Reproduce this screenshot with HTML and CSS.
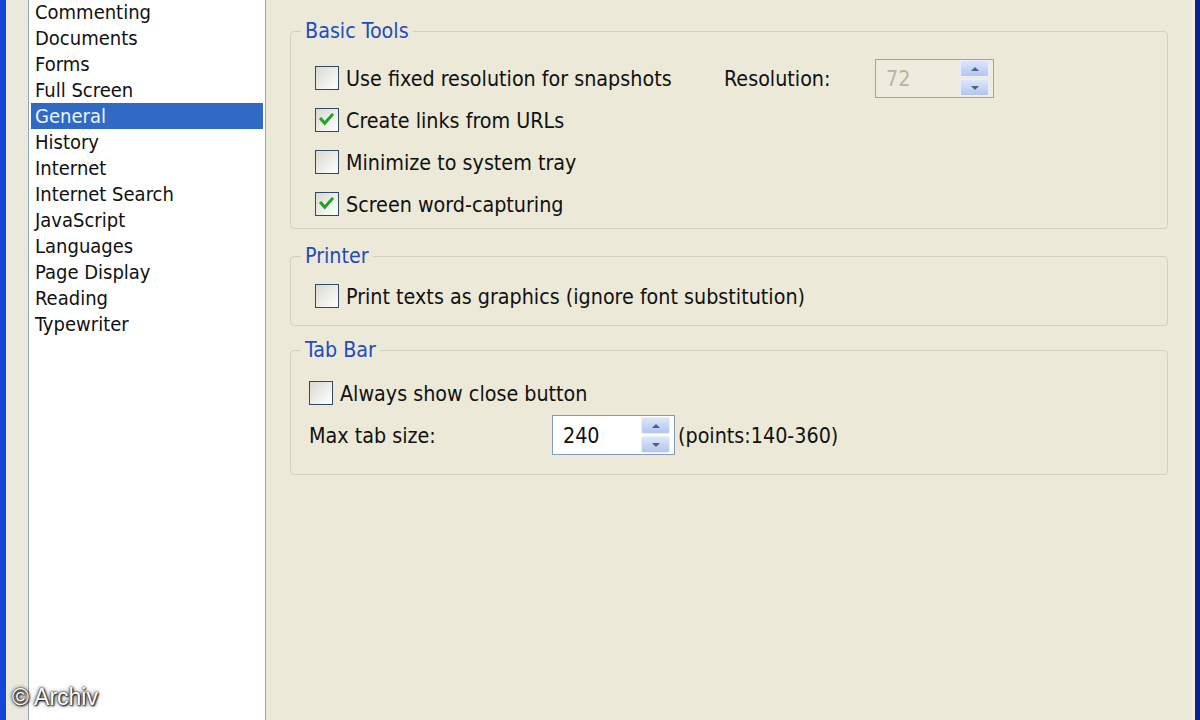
FILE: index.html
```html
<!DOCTYPE html>
<html>
<head>
<meta charset="utf-8">
<link rel="stylesheet" href="styles.css">
</head>
<body>
<div class="window">
  <div class="frame-left"></div>
  <div class="gutter"></div>
  <div class="list">
    <ul class="items">
      <li>Commenting</li>
      <li>Documents</li>
      <li>Forms</li>
      <li>Full Screen</li>
      <li class="selected">General</li>
      <li>History</li>
      <li>Internet</li>
      <li>Internet Search</li>
      <li>JavaScript</li>
      <li>Languages</li>
      <li>Page Display</li>
      <li>Reading</li>
      <li>Typewriter</li>
    </ul>
  </div>
  <div class="panel">
    <fieldset class="group basic">
      <legend>Basic Tools</legend>
      <div class="row">
        <span class="check res-check"><span class="cb"></span>Use fixed resolution for snapshots</span>
        <span class="res-label">Resolution:</span>
        <span class="spin disabled res-spin">
          <span class="spin-val">72</span>
          <span class="spin-btns"><span class="sbtn"><span class="tri up"></span></span><span class="sbtn"><span class="tri down"></span></span></span>
        </span>
      </div>
      <div class="row">
        <span class="check"><span class="cb checked"><svg viewBox="0 0 24 24" width="22" height="22"><polyline points="5.5,11 9.5,15.5 17.5,6.5" fill="none" stroke="#21a121" stroke-width="3.2" stroke-linecap="square"/></svg></span>Create links from URLs</span>
      </div>
      <div class="row">
        <span class="check"><span class="cb"></span>Minimize to system tray</span>
      </div>
      <div class="row">
        <span class="check"><span class="cb checked"><svg viewBox="0 0 24 24" width="22" height="22"><polyline points="5.5,11 9.5,15.5 17.5,6.5" fill="none" stroke="#21a121" stroke-width="3.2" stroke-linecap="square"/></svg></span>Screen word-capturing</span>
      </div>
    </fieldset>
    <fieldset class="group printer">
      <legend>Printer</legend>
      <div class="row">
        <span class="check"><span class="cb"></span>Print texts as graphics (ignore font substitution)</span>
      </div>
    </fieldset>
    <fieldset class="group tabbar">
      <legend>Tab Bar</legend>
      <div class="row">
        <span class="check"><span class="cb"></span>Always show close button</span>
      </div>
      <div class="row">
        <span class="tab-label">Max tab size:</span>
        <span class="spin tab-spin">
          <span class="spin-val">240</span>
          <span class="spin-btns"><span class="sbtn"><span class="tri up"></span></span><span class="sbtn"><span class="tri down"></span></span></span>
        </span>
        <span class="points">(points:140-360)</span>
      </div>
    </fieldset>
  </div>
  <div class="frame-right"></div>
</div>
<div class="watermark">© Archiv</div>
</body>
</html>
```
FILE: styles.css
```css
html, body {
  margin: 0;
  padding: 0;
}
body {
  width: 1200px;
  height: 720px;
  overflow: hidden;
  position: relative;
  background: #ece9d8;
  font-family: "DejaVu Sans Condensed", "DejaVu Sans", sans-serif;
  font-stretch: condensed;
  font-size: 20px;
  color: #111;
}
.window {
  display: flex;
  height: 720px;
}
.frame-left {
  width: 6px;
  background: #1246d6;
}
.gutter {
  width: 22px;
  background: #ebe9de;
}
.list {
  width: 232px;
  background: #fff;
  border-left: 1px solid #8fa6bf;
  border-right: 1px solid #8fa6bf;
  padding: 0 2px;
}
.items {
  list-style: none;
  margin: -1px 0 0 0;
  padding: 0;
}
.items li {
  height: 26px;
  line-height: 26px;
  padding-left: 4px;
  white-space: nowrap;
  color: #111;
}
.items li.selected {
  background: #316ac5;
  color: #eef4ff;
}
.panel {
  flex: 1;
  padding: 19px 24px 0 24px;
  font-size: 21.3px;
}
.frame-right {
  width: 5px;
  border-left: 3px solid #f3efe6;
  background: #0b2291;
}
.group {
  margin: 0;
  padding: 0;
  border: 1px solid #d3d0c0;
  border-radius: 4px;
  min-width: 0;
}
.group legend {
  margin-left: 10px;
  padding: 0 4px;
  line-height: 24px;
  color: #1f4cc0;
}
.group .row {
  padding-left: 24px;
}
.basic {
  padding-top: 14px;
  padding-bottom: 3px;
}
.printer {
  margin-top: 15px;
  padding-top: 7px;
  padding-bottom: 8px;
}
.tabbar {
  margin-top: 12px;
  padding-top: 10px;
  padding-bottom: 18px;
}
.tabbar .row {
  padding-left: 18px;
}
.row {
  height: 42px;
  display: flex;
  align-items: center;
  white-space: nowrap;
}
.check {
  display: flex;
  align-items: center;
}
.cb {
  width: 22px;
  height: 22px;
  border: 1px solid #2e4a66;
  background: linear-gradient(135deg, #d9d8d0 0%, #f4f4f0 70%, #fff 100%);
  margin-right: 7px;
  display: flex;
  align-items: center;
  justify-content: center;
  flex: none;
}
.res-check {
  width: 409px;
}
.res-label {
  width: 151px;
}
.spin {
  display: flex;
  align-items: center;
  justify-content: space-between;
  border: 1px solid #7f9db9;
  background: #fff;
  box-sizing: border-box;
  padding: 0 4px 0 10px;
}
.spin.disabled {
  border-color: #a4a39c;
  background: #efebdf;
  color: #b9b3a2;
}
.res-spin {
  width: 119px;
  height: 39px;
}
.tab-spin {
  width: 123px;
  height: 40px;
}
.tab-label {
  width: 243px;
}
.points {
  margin-left: 3px;
}
.spin-btns {
  display: flex;
  flex-direction: column;
  gap: 2px;
}
.sbtn {
  width: 29px;
  height: 17px;
  box-sizing: border-box;
  border: 1px solid #e8eefb;
  border-radius: 2px;
  background: linear-gradient(180deg, #dde7fb 0%, #c3d3f6 60%, #b3c5f0 100%);
  display: flex;
  align-items: center;
  justify-content: center;
}
.tri {
  width: 0;
  height: 0;
  border-left: 4px solid transparent;
  border-right: 4px solid transparent;
}
.tri.up {
  border-bottom: 4px solid #4d6185;
}
.tri.down {
  border-top: 4px solid #4d6185;
}
.watermark {
  position: absolute;
  left: 12px;
  top: 684px;
  font-family: "Liberation Sans", Arial, sans-serif;
  font-stretch: normal;
  font-size: 23px;
  color: #fff;
  text-shadow: 0 0 2px #000, 0 0 4px #333, 1px 1px 2px #000;
}
```
